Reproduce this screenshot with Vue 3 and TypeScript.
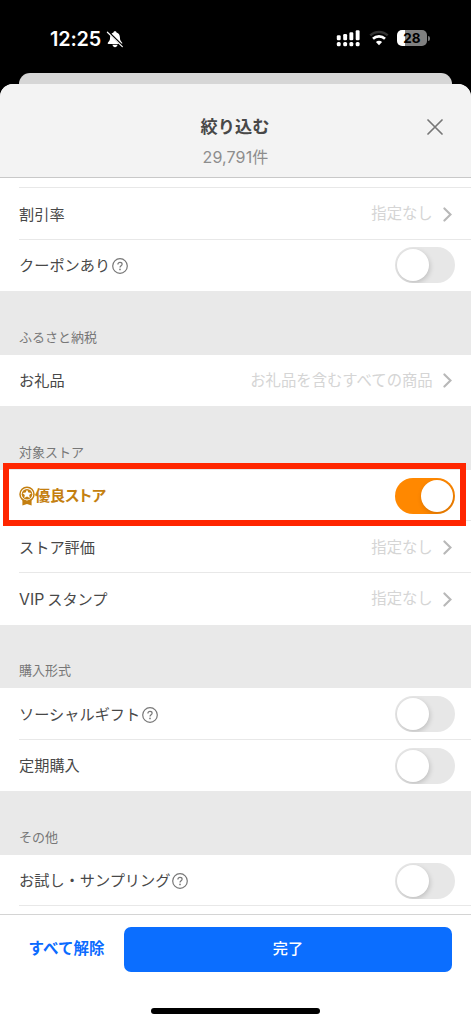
<script setup lang="ts">
interface Item {
  label: string
  latin?: string
  kind: 'link' | 'toggle'
  value?: string
  on?: boolean
  help?: boolean
  medal?: boolean
}
interface Group {
  title?: string
  items: Item[]
}

const groups: Group[] = [
  {
    items: [
      { label: '割引率', kind: 'link', value: '指定なし' },
      { label: 'クーポンあり', kind: 'toggle', help: true },
    ],
  },
  { title: 'ふるさと納税', items: [{ label: 'お礼品', kind: 'link', value: 'お礼品を含むすべての商品' }] },
  {
    title: '対象ストア',
    items: [
      { label: '優良ストア', kind: 'toggle', on: true, medal: true },
      { label: 'ストア評価', kind: 'link', value: '指定なし' },
      { latin: 'VIP', label: 'スタンプ', kind: 'link', value: '指定なし' },
    ],
  },
  {
    title: '購入形式',
    items: [
      { label: 'ソーシャルギフト', kind: 'toggle', help: true },
      { label: '定期購入', kind: 'toggle' },
    ],
  },
  { title: 'その他', items: [{ label: 'お試し・サンプリング', kind: 'toggle', help: true }] },
]
</script>

<template>
  <div class="screen">
    <div class="status">
      <div class="clock">
        <span class="time">12:25</span>
        <svg class="bell" width="18" height="18" viewBox="0 0 18 18">
          <path d="M9 1.2C8.1 1.2 7.6 1.8 7.5 2.4C5.2 3.1 4.1 5 4.1 7.3C4.1 10.3 3.2 11.3 2 12.5C1.5 13.1 1.6 14 2.5 14H15.5C16.4 14 16.5 13.1 16 12.5C14.8 11.3 13.9 10.3 13.9 7.3C13.9 5 12.8 3.1 10.5 2.4C10.4 1.8 9.9 1.2 9 1.2Z" fill="#fff" />
          <path d="M6.4 14.8H11.6C11.2 16.4 10.3 17.2 9 17.2C7.7 17.2 6.8 16.4 6.4 14.8Z" fill="#fff" />
          <path d="M2 1.8L16.8 16.2" stroke="#000" stroke-width="2.3" />
          <path d="M1.4 2.2L16.3 16.6" stroke="#fff" stroke-width="1.2" stroke-linecap="round" />
        </svg>
      </div>
      <div class="indicators">
        <svg width="24" height="18" viewBox="0 0 24 18" fill="#fff">
          <rect x="0.8" y="6.2" width="3.9" height="5" rx="1.2" />
          <rect x="7.2" y="5" width="3.9" height="6.2" rx="1.2" />
          <rect x="13.4" y="3.2" width="3.9" height="8" rx="1.2" />
          <rect x="19.7" y="1.2" width="3.9" height="10" rx="1.2" />
          <rect x="0.8" y="12.9" width="3.9" height="4.3" rx="1.5" />
          <rect x="7.2" y="12.9" width="3.9" height="4.3" rx="1.5" />
          <rect x="13.4" y="12.9" width="3.9" height="4.3" rx="1.5" />
          <rect x="19.7" y="12.9" width="3.9" height="4.3" rx="1.5" />
        </svg>
        <svg class="wifi" width="20" height="16" viewBox="0 0 20 16" fill="none">
          <path d="M1.3 5.4C6 0.8 14 0.8 18.7 5.4" stroke="#333" stroke-width="2.5" />
          <path d="M4 8.8C7.3 5.6 12.7 5.6 16 8.8" stroke="#fff" stroke-width="2.6" />
          <path d="M10 15.2L6.9 12C8.6 10.4 11.4 10.4 13.1 12Z" fill="#fff" />
        </svg>
        <div class="battery"><span>28</span></div>
        <i class="nub"></i>
      </div>
    </div>

    <div class="behind"></div>

    <section class="sheet">
      <header class="head">
        <h1>絞り込む</h1>
        <p>29,791件</p>
        <svg class="close" width="16" height="16" viewBox="0 0 16 16">
          <path d="M1 1L15 15M15 1L1 15" stroke="#777" stroke-width="1.7" stroke-linecap="round" />
        </svg>
      </header>

      <main class="list">
        <div v-for="(group, g) in groups" :key="g" class="group">
          <h2 v-if="group.title"><span>{{ group.title }}</span></h2>
          <div v-for="item in group.items" :key="item.label" class="row" :class="{ marked: item.medal }">
            <div class="label" :class="{ gold: item.medal }">
              <svg v-if="item.medal" class="medal" width="16" height="20" viewBox="0 0 16 20">
                <path d="M3.4 13.5V19.4L8 17.9L12.6 19.4V13.5Z" fill="#c47f10" />
                <circle cx="8" cy="8.2" r="7" fill="#fff" stroke="#c47f10" stroke-width="1.5" />
                <circle cx="8" cy="8.2" r="5.3" fill="#c47f10" />
                <path d="M8 3.7L9.4 6.5L12.5 6.9L10.2 9L10.8 12.1L8 10.6L5.2 12.1L5.8 9L3.5 6.9L6.6 6.5Z" fill="#fff" />
              </svg>
              <span v-if="item.latin" class="latin">{{ item.latin }}</span>
              <span>{{ item.label }}</span>
              <svg v-if="item.help" class="help" width="16" height="16" viewBox="0 0 16 16" fill="none">
                <circle cx="8" cy="8" r="7.3" stroke="#777" stroke-width="1.2" />
                <path d="M5.9 6.4C5.9 5.1 6.8 4.4 8 4.4C9.2 4.4 10.1 5.1 10.1 6.2C10.1 7.7 8 7.7 8 9.4" stroke="#777" stroke-width="1.2" />
                <circle cx="8" cy="11.4" r="0.85" fill="#777" />
              </svg>
            </div>
            <div v-if="item.kind === 'link'" class="value">
              <span>{{ item.value }}</span>
              <svg width="9" height="15" viewBox="0 0 9 15" fill="none">
                <path d="M1.4 1.4L7.5 7.5L1.4 13.6" stroke="#b8b8b8" stroke-width="2.1" stroke-linecap="round" />
              </svg>
            </div>
            <div v-else class="toggle" :class="{ on: item.on }"><i></i></div>
          </div>
        </div>
      </main>

      <footer class="foot">
        <button class="clear">すべて解除</button>
        <button class="done">完了</button>
      </footer>
      <div class="home"></div>
    </section>
  </div>
</template>

<style>
body {
  margin: 0;
  background: #000;
}
</style>

<style scoped>
.screen {
  width: 471px;
  height: 1024px;
  overflow: hidden;
  background: #000;
  display: flex;
  flex-direction: column;
  font-family: "Liberation Sans", "Noto Sans CJK JP", sans-serif;
  color: #484848;
}
.status {
  height: 73px;
  flex: none;
  display: flex;
  justify-content: space-between;
  align-items: flex-start;
  box-sizing: border-box;
  padding: 28px 41px 0 50px;
  color: #fff;
}
.clock {
  display: flex;
  align-items: center;
  height: 21px;
}
.time {
  font: 600 19.8px/21px Inter, sans-serif;
  width: 52px;
  padding-top: 1px;
  letter-spacing: -0.15px;
  white-space: nowrap;
}
.bell {
  margin: 0 0 0 3.5px;
}
.indicators {
  display: flex;
  align-items: center;
  height: 20px;
}
.wifi {
  margin: 0 8px 0 9px;
}
.battery {
  width: 30px;
  height: 16px;
  border-radius: 5px;
  background: linear-gradient(to right, #fff 28%, #808080 28%);
  color: #000;
  font: 700 13.5px/16px Inter, sans-serif;
  text-align: center;
}
.nub {
  width: 2px;
  height: 5px;
  margin-left: 1px;
  border-radius: 0 2px 2px 0;
  background: #777;
}
.behind {
  flex: none;
  height: 11px;
  margin: 0 19px;
  background: #d6d6d6;
  border-radius: 11px 11px 0 0;
}
.sheet {
  flex: 1;
  min-height: 0;
  display: flex;
  flex-direction: column;
  background: #fff;
  border-radius: 13px 13px 0 0;
  overflow: hidden;
}
.head {
  position: relative;
  flex: none;
  height: 94px;
  box-sizing: border-box;
  padding-top: 30px;
  background: #f3f3f3;
  border-bottom: 1px solid #c8c8c8;
  text-align: center;
}
h1 {
  margin: 0 1px 0 0;
  font-size: 17.2px;
  line-height: 26px;
  font-weight: 700;
}
p {
  margin: 5px 0 0;
  font: 400 16px/24px Inter, "Noto Sans CJK JP", sans-serif;
  letter-spacing: 0.15px;
  color: #8d8d8d;
}
.close {
  position: absolute;
  right: 28.5px;
  top: 34.5px;
}
.list {
  height: 736px;
  flex: none;
  box-sizing: border-box;
  padding-top: 10.1px;
  overflow: hidden;
}
h2 {
  margin: 0;
  height: 63.5px;
  box-sizing: border-box;
  padding: 36.5px 19px 0;
  background: #e9e9e9;
  color: #777;
  font-size: 13px;
  line-height: 20px;
  font-weight: 400;
}
.row {
  position: relative;
  height: 51.6px;
  box-sizing: border-box;
  padding: 0 16.5px 0 19px;
  display: flex;
  align-items: center;
  justify-content: space-between;
}
.row:not(:last-child)::after,
.group:last-child .row::after {
  content: "";
  position: absolute;
  left: 19px;
  right: 0;
  bottom: 0;
  height: 1px;
  background: #e8e8e8;
}
.group:first-child .row:first-child::before {
  content: "";
  position: absolute;
  left: 19px;
  right: 0;
  top: -1px;
  height: 1px;
  background: #e8e8e8;
}
.marked::before {
  content: "";
  position: absolute;
  z-index: 2;
  box-sizing: border-box;
  left: 3.4px;
  right: 4.6px;
  top: -7px;
  height: 63px;
  border: 6px solid #ff2600;
}
.label {
  display: flex;
  align-items: center;
  font: 400 15.2px/24px Inter, "Noto Sans CJK JP", sans-serif;
  padding-top: 1.4px;
}
.latin {
  font-size: 15.8px;
  margin-right: 3px;
}
.gold {
  color: #c47f10;
  font-weight: 700;
  font-feature-settings: "palt";
  letter-spacing: -0.15px;
}
.help {
  margin-left: 2px;
}
.value {
  display: flex;
  align-items: center;
  font-size: 15.35px;
  line-height: 24px;
  color: #d5d5d5;
  padding-top: 0.6px;
}
.value svg {
  margin: 0 2.8px 0 10px;
}
.toggle {
  width: 60px;
  height: 36px;
  box-sizing: border-box;
  padding: 2px;
  border-radius: 18px;
  background: #e7e7e7;
  display: flex;
  overflow: hidden;
}
.toggle i {
  width: 32px;
  height: 32px;
  border-radius: 50%;
  background: #fff;
  box-shadow: 1px 2px 5px rgba(0, 0, 0, 0.17);
}
.on {
  background: #ff8800;
  justify-content: flex-end;
}
.foot {
  height: 58px;
  flex: none;
  box-sizing: border-box;
  border-top: 1px solid #d4d4d4;
  padding: 12px 19px 0 9px;
  display: flex;
}
button {
  border: 0;
  padding: 0 0 3px;
  font: 700 15.5px/41px "Noto Sans CJK JP", sans-serif;
  height: 44.5px;
}
.clear {
  width: 115px;
  background: none;
  color: #0b6bff;
}
.done {
  flex: 1;
  border-radius: 7px;
  background: #0b6eff;
  color: #fff;
  font-size: 15.2px;
  font-weight: 500;
}
.home {
  width: 169px;
  height: 6px;
  margin: 36px auto 0;
  border-radius: 3px;
  background: #000;
}
</style>
